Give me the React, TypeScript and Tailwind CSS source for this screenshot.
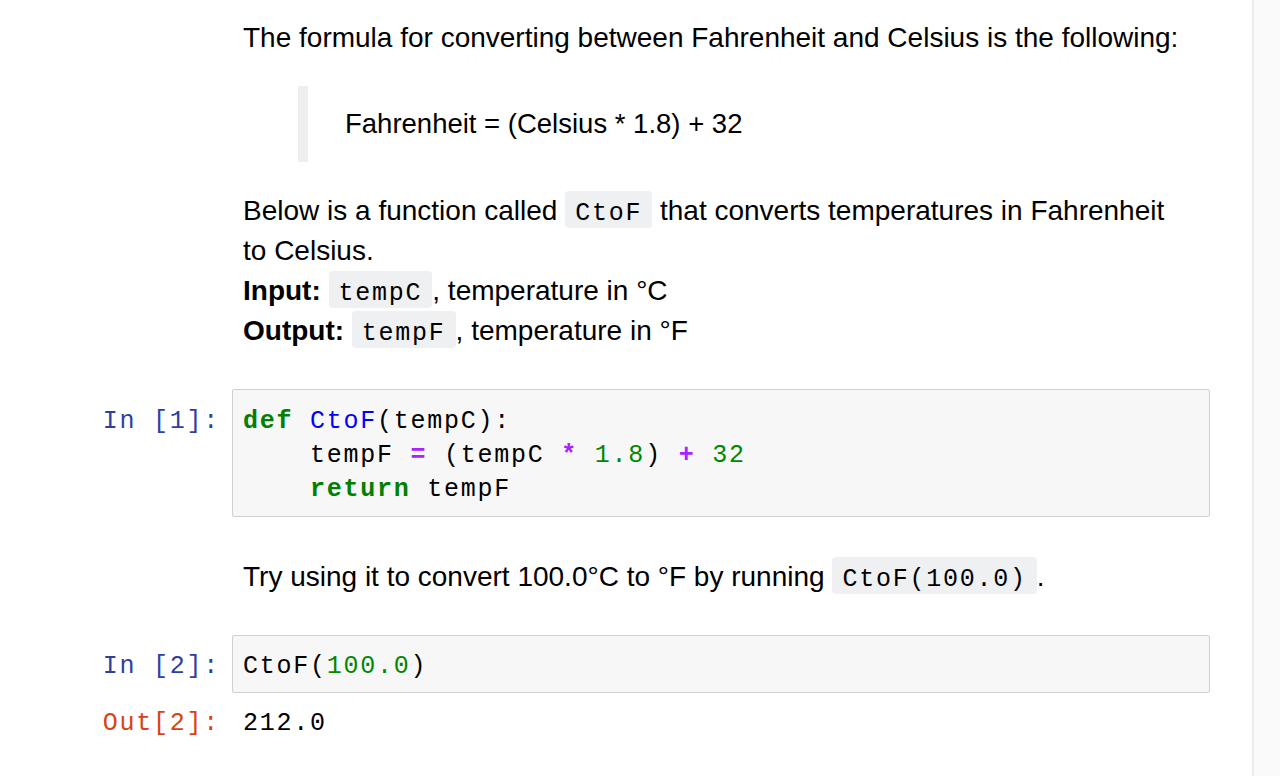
import React from "react";

const sans = "font-['Liberation_Sans',Arial,sans-serif]";
const mono = "font-['Liberation_Mono','Courier_New',monospace] text-[25px] tracking-[1.75px]";

function InlineCode({ children }: { children: React.ReactNode }) {
  return (
    <code className={`${mono} leading-none bg-[#eff0f1] rounded-[4px] px-[10px] pt-[8px] pb-0 text-black`}>{children}</code>
  );
}

function Prompt({ kind, n }: { kind: "In" | "Out"; n: number }) {
  return (
    <div
      className={`${mono} leading-[34px] text-right pr-[12px] ${kind === "In" ? "text-[#303f9f]" : "text-[#d84315]"} whitespace-pre`}
    >
      {kind === "In" ? `In [${n}]:` : `Out[${n}]:`}
    </div>
  );
}

const K = ({ children }: { children: React.ReactNode }) => (
  <span className="text-[#008000] font-bold">{children}</span>
);
const O = ({ children }: { children: React.ReactNode }) => (
  <span className="text-[#aa22ff] font-bold">{children}</span>
);
const N = ({ children }: { children: React.ReactNode }) => (
  <span className="text-[#008800]">{children}</span>
);

export default function App() {
  return (
    <div className="flex h-[776px] w-[1280px] overflow-hidden bg-white">
      <div className={`flex-1 ${sans} text-[28px] leading-[40px] text-black pt-[18px]`}>
        {/* Markdown cell 1 */}
        <div className="grid grid-cols-[232px_978px]">
          <div />
          <div className="pl-[11px]">
            <p>The formula for converting between Fahrenheit and Celsius is the following:</p>
            <div className="mt-[28px] ml-[55px] border-l-[10px] border-[#eeeeee] pl-[37px] py-[18px] text-[27.5px]">
              <p>Fahrenheit = (Celsius * 1.8) + 32</p>
            </div>
            <p className="mt-[29px]">
              Below is a function called <InlineCode>CtoF</InlineCode> that converts temperatures in Fahrenheit
              <br />
              to Celsius.
              <br />
              <b>Input:</b> <InlineCode>tempC</InlineCode>, temperature in °C
              <br />
              <b>Output:</b> <InlineCode>tempF</InlineCode>, temperature in °F
            </p>
          </div>
        </div>

        {/* Code cell 1 */}
        <div className="grid grid-cols-[232px_978px] mt-[38px]">
          <div className="pt-[16px]">
            <Prompt kind="In" n={1} />
          </div>
          <div
            className={`${mono} leading-[34px] border border-[#cfcfcf] rounded-[2px] bg-[#f7f7f7] pl-[10px] pt-[15px] pb-[9px] whitespace-pre`}
          >
            <div>
              <K>def</K> <span className="text-[#0000ff]">CtoF</span>(tempC):
            </div>
            <div>
              {"    tempF "}
              <O>=</O>
              {" (tempC "}
              <O>*</O> <N>1.8</N>
              {") "}
              <O>+</O> <N>32</N>
            </div>
            <div>
              {"    "}
              <K>return</K>
              {" tempF"}
            </div>
          </div>
        </div>

        {/* Markdown cell 2 */}
        <div className="grid grid-cols-[232px_978px] mt-[40px]">
          <div />
          <div className="pl-[11px]">
            <p>
              Try using it to convert 100.0°C to °F by running <InlineCode>CtoF(100.0)</InlineCode>.
            </p>
          </div>
        </div>

        {/* Code cell 2 */}
        <div className="grid grid-cols-[232px_978px] mt-[38px]">
          <div className="pt-[15px]">
            <Prompt kind="In" n={2} />
          </div>
          <div
            className={`${mono} leading-[34px] border border-[#cfcfcf] rounded-[2px] bg-[#f7f7f7] pl-[10px] pt-[14px] pb-[8px] whitespace-pre`}
          >
            <div>
              CtoF(<N>100.0</N>)
            </div>
          </div>
        </div>

        {/* Output */}
        <div className="grid grid-cols-[232px_978px] mt-[14px]">
          <Prompt kind="Out" n={2} />
          <div className={`${mono} leading-[34px] pl-[11px] text-black`}>212.0</div>
        </div>
      </div>
      <div className="w-[28px] shrink-0 border-l-2 border-[#ebebeb] bg-[#fafafa]" />
    </div>
  );
}
